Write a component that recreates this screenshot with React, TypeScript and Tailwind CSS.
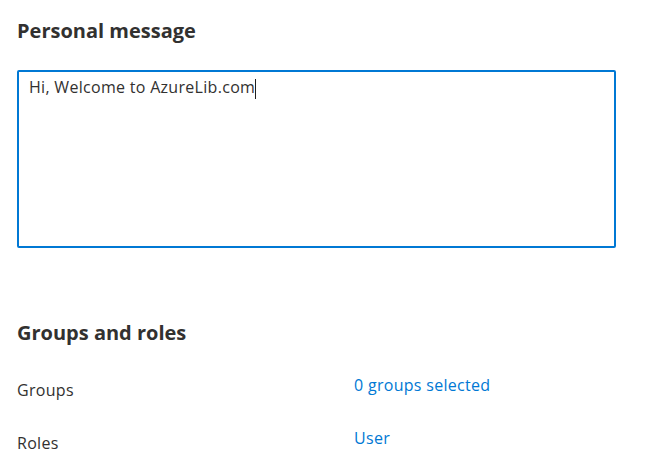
export default function App() {
  return (
    <div className="min-h-[467px] w-[650px] bg-white pl-[17px] pt-[17px] text-[#323130] [font-family:'Open_Sans',sans-serif]">
      <h2 className="text-[20px] font-bold leading-[28px]">Personal message</h2>

      <div className="mt-[25px] h-[178px] w-[599px] rounded-[2px] border-2 border-[#0078d4] px-[10px] pt-[4px]">
        <p className="text-[16px] leading-[22px] tracking-[0.3px] text-[#323130]">
          Hi, Welcome to AzureLib.com
          <span className="inline-block h-[20px] w-px bg-[#201f1e] align-middle" />
        </p>
      </div>

      <h2 className="mt-[71px] text-[20px] font-bold leading-[28px]">Groups and roles</h2>

      <div className="mt-[27px] grid grid-cols-[337px_1fr] gap-y-[26px] text-[16px] leading-[22px] tracking-[0.3px]">
        <span className="pt-[5px]">Groups</span>
        <a className="text-[#0078d4]">0 groups selected</a>
        <span className="pt-[5px]">Roles</span>
        <a className="text-[#0078d4]">User</a>
      </div>
    </div>
  );
}
